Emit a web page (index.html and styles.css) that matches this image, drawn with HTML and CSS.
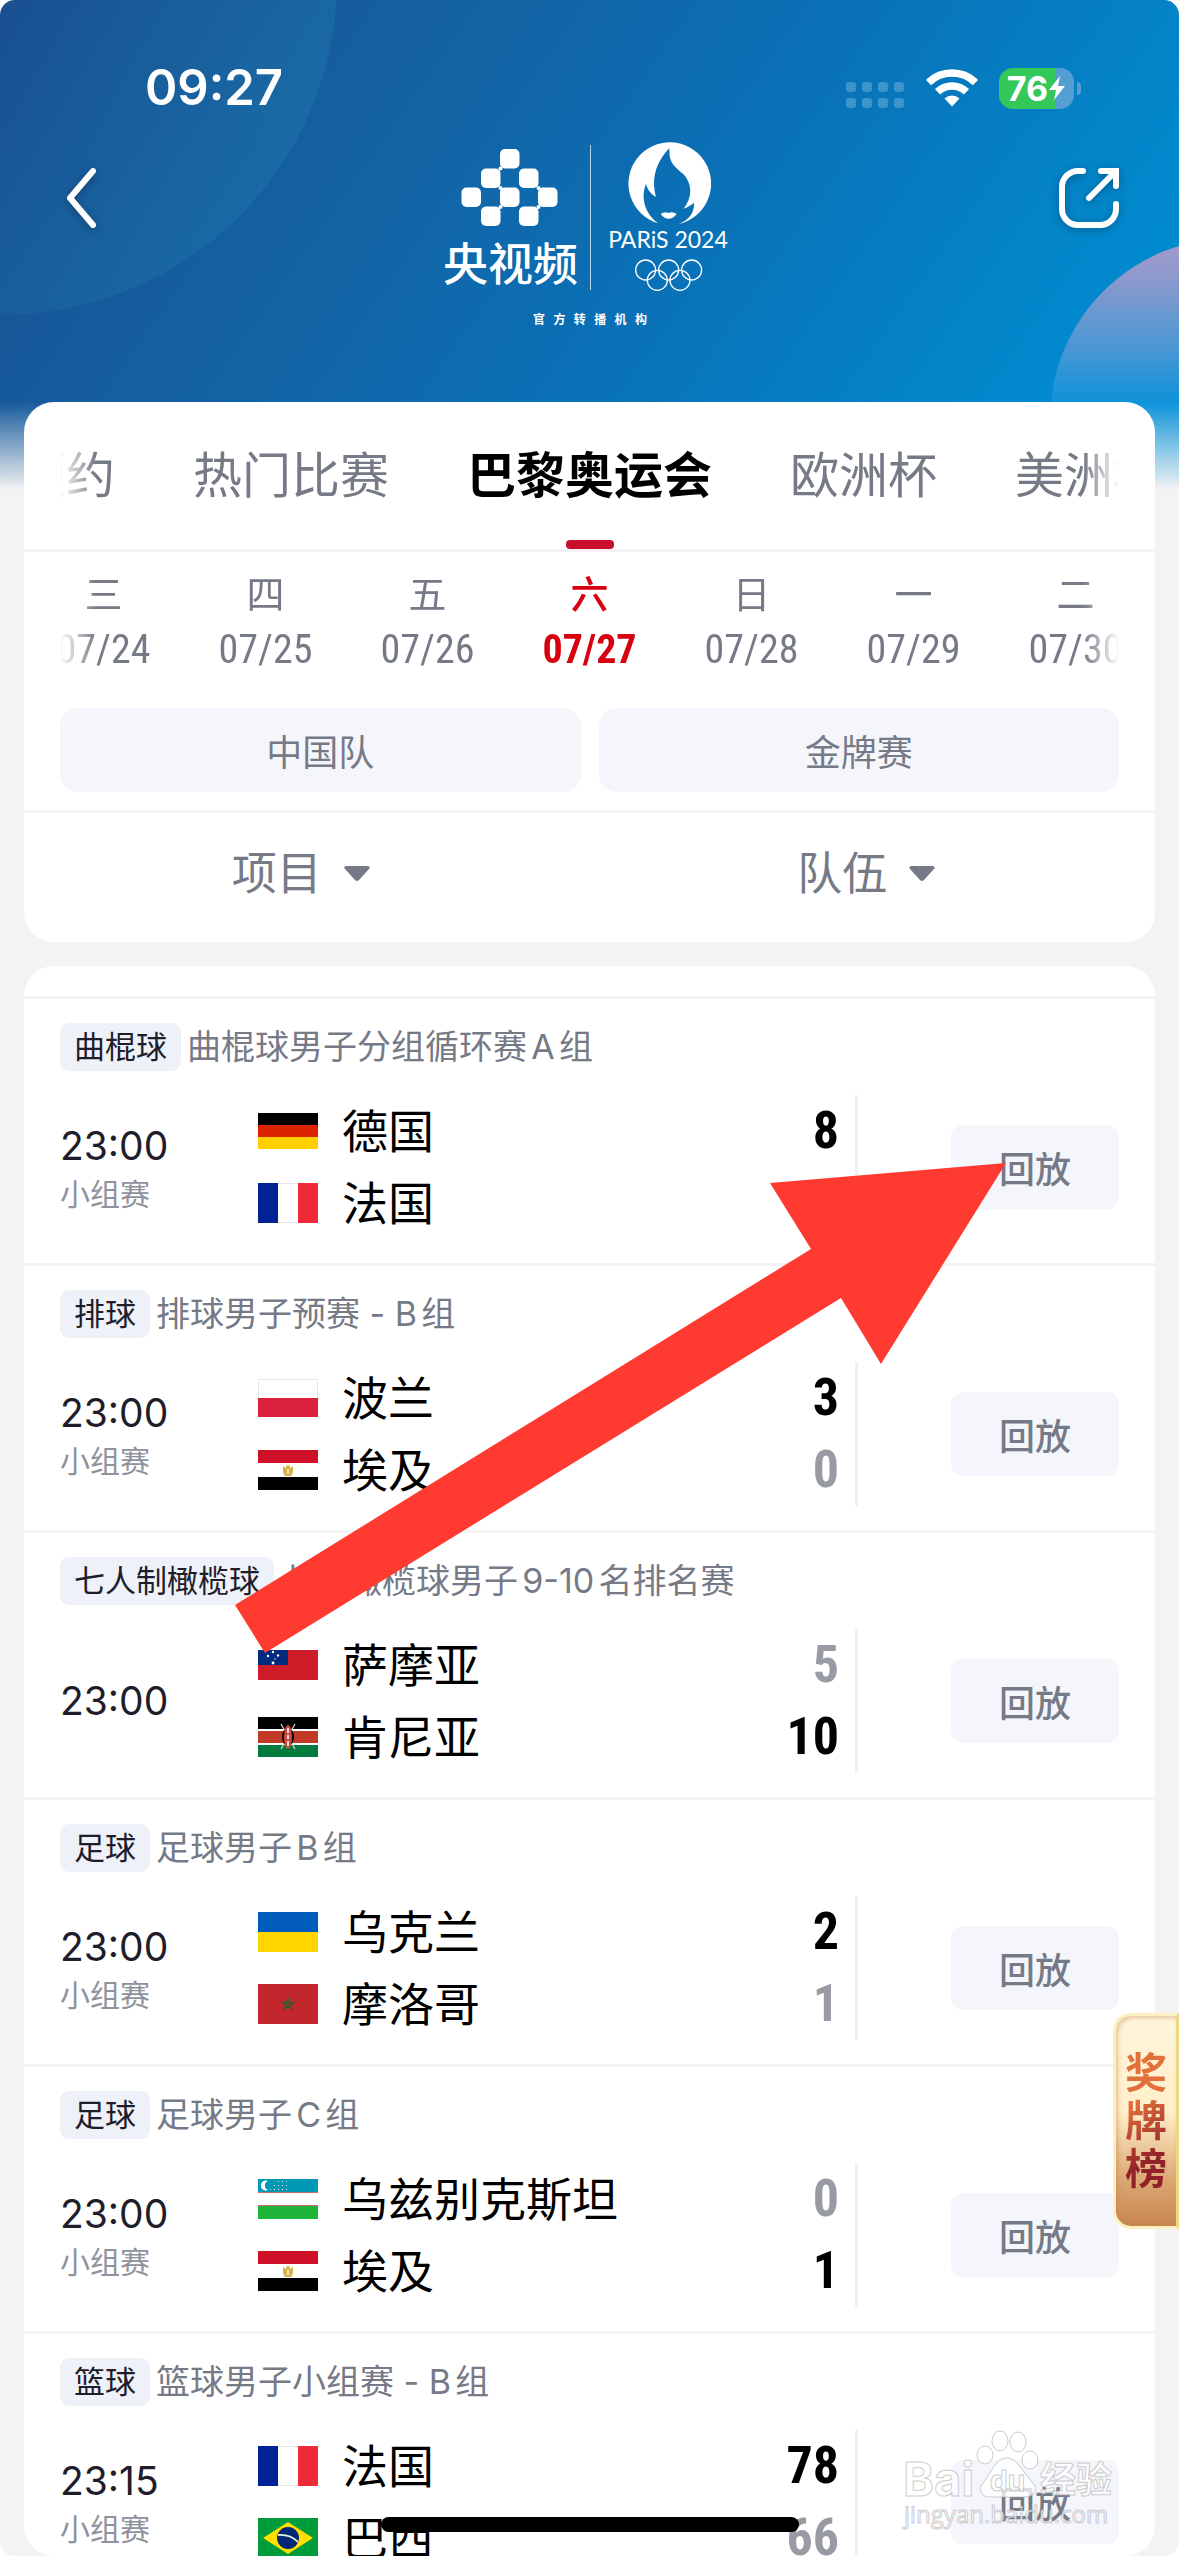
FILE: index.html
```html
<!DOCTYPE html>
<html lang="zh-CN">
<head>
<meta charset="utf-8">
<meta name="viewport" content="width=device-width, initial-scale=1">
<title>巴黎奥运会</title>
<link rel="stylesheet" href="styles.css">
</head>
<body>
<svg class="defs" aria-hidden="true">
  <symbol id="de" viewBox="0 0 60 40"><path fill="#000" d="M0 2h60v12H0z"/><path fill="#dd2200" d="M0 14h60v12H0z"/><path fill="#ffcf00" d="M0 26h60v12H0z"/></symbol>
  <symbol id="fr" viewBox="0 0 60 40"><path fill="#fff" stroke="#e8e8e8" d="M0 .5h60v39H0z"/><path fill="#002295" d="M0 0h20v40H0z"/><path fill="#ef2b3a" d="M40 0h20v40H40z"/></symbol>
  <symbol id="pl" viewBox="0 0 60 40"><path fill="#fff" stroke="#e8e8e8" d="M.5 1.5h59v20H.5z"/><path fill="#dc213d" d="M0 20h60v19H0z"/></symbol>
  <symbol id="eg" viewBox="0 0 60 40"><path fill="#fff" d="M0 0h60v40H0z"/><path fill="#ce1126" d="M0 0h60v13H0z"/><path fill="#000" d="M0 27h60v13H0z"/><path fill="#d6b34a" d="M25 16l3 2 1-3h2l1 3 3-2v8l-2-1 1 3h-8l1-3-2 1z"/><path fill="#f3e6bd" d="M29 19h2v5h-2z"/></symbol>
  <symbol id="ws" viewBox="0 0 60 40"><path fill="#ce1d28" d="M0 5h60v30H0z"/><path fill="#002b7f" d="M0 5h30v15H0z"/><g fill="#fff"><circle cx="15" cy="7" r="1.2"/><circle cx="10" cy="11" r="1.2"/><circle cx="20" cy="10.500" r="1.200"/><circle cx="17" cy="14" r=".7"/><circle cx="15" cy="18" r="1.400"/></g></symbol>
  <symbol id="ke" viewBox="0 0 60 40"><path fill="#fff" d="M0 0h60v40H0z"/><path d="M0 0h60v12H0z"/><path fill="#c13a26" d="M0 14h60v12H0z"/><path fill="#007a3d" d="M0 28h60v12H0z"/><path stroke="#ddd" stroke-width="1.200" d="M23 7l14 25M37 7L23 32"/><ellipse cx="30" cy="20" rx="6" ry="9"/><ellipse cx="30" cy="20" rx="4" ry="12" fill="#cf4a3c"/><path stroke="#fff" stroke-width="1.500" d="M30 11v5M30 18v4M30 24v5"/></symbol>
  <symbol id="ua" viewBox="0 0 60 40"><path fill="#005bbb" d="M0 0h60v20H0z"/><path fill="#ffd500" d="M0 20h60v20H0z"/></symbol>
  <symbol id="ma" viewBox="0 0 60 40"><path fill="#c1272d" d="M0 0h60v40H0z"/><path fill="none" stroke="#39582b" stroke-width="1.500" d="M30 14.500l3.400 10.300-8.800-6.300h10.800l-8.800 6.300z"/></symbol>
  <symbol id="uz" viewBox="0 0 60 40"><path fill="#fff" d="M0 0h60v40H0z"/><path fill="#0099b5" d="M0 0h60v13H0z"/><path fill="#1eb53a" d="M0 27h60v13H0z"/><path fill="#ce6a72" d="M0 13h60v1H0zM0 26h60v1H0z"/><path fill="#fff" d="M10 2a5 5 0 1 0 0 9 4.800 4.800 0 0 1 0-9z"/><g fill="#cdebf1"><path d="M20 2h1v1h-1zM24 2h1v1h-1zM28 2h1v1h-1zM16 6h1v1h-1zM20 6h1v1h-1zM24 6h1v1h-1zM28 6h1v1h-1zM12 10h1v1h-1zM16 10h1v1h-1zM20 10h1v1h-1zM24 10h1v1h-1zM28 10h1v1h-1z"/></g></symbol>
  <symbol id="br" viewBox="0 0 60 40"><path fill="#009c3b" d="M0 0h60v40H0z"/><path fill="#ffdf00" d="M5 20L30 4l25 16-25 16z"/><circle cx="30" cy="20" r="11" fill="#002776"/><path fill="none" stroke="#e6f0d8" stroke-width="1.800" d="M20 17q12-1 20 7"/></symbol>
</svg>

<div class="app">
  <div class="backdrop" aria-hidden="true"></div>

  <header class="hero">
    <div class="status">
      <span class="clock">09:27</span>
      <div class="status-icons">
        <svg width="58" height="26" viewBox="0 0 58 26" class="dots" aria-hidden="true"><g fill="#fff" fill-opacity=".22"><rect width="10" height="10" rx="3"/><rect x="16" width="10" height="10" rx="3"/><rect x="32" width="10" height="10" rx="3"/><rect x="48" width="10" height="10" rx="3"/><rect y="16" width="10" height="10" rx="3"/><rect x="16" y="16" width="10" height="10" rx="3"/><rect x="32" y="16" width="10" height="10" rx="3"/><rect x="48" y="16" width="10" height="10" rx="3"/></g></svg>
        <svg width="52" height="38" viewBox="0 0 52 38" class="wifi" aria-hidden="true"><g fill="none" stroke="#fff" stroke-width="7.500"><path d="M2.500 13.500a34 34 0 0 1 47 0"/><path d="M11.500 22.700a21 21 0 0 1 29 0"/></g><path fill="#fff" d="M18.500 29.500a11 11 0 0 1 15 0L26 37.500z"/></svg>
        <div class="battery"><span>76</span><svg width="18" height="26" viewBox="0 0 18 26" aria-hidden="true"><path fill="#fff" d="M12 1L1 15h7l-2 10L17 11h-7z"/></svg></div>
      </div>
    </div>
    <nav class="nav">
      <button class="icon-btn" type="button" aria-label="返回"><svg width="60" height="60" viewBox="0 0 60 60"><path fill="none" stroke="#fff" stroke-width="6" stroke-linecap="round" stroke-linejoin="round" d="M33 3L10 30l23 27"/></svg></button>
      <svg class="logo" width="300" height="190" viewBox="440 142 300 190" role="img" aria-label="央视频 PARIS 2024 官方转播机构">
        <g fill="#fff">
          <rect x="500" y="149" width="19.500" height="19.500" rx="5"/><rect x="481" y="168.500" width="19.500" height="19.500" rx="5"/><rect x="519" y="168.500" width="19.500" height="19.500" rx="5"/><rect x="461.500" y="187.500" width="19.500" height="19.500" rx="5"/><rect x="500" y="187.500" width="19.500" height="19.500" rx="5"/><rect x="538" y="187.500" width="19.500" height="19.500" rx="5"/><rect x="481" y="206.500" width="19.500" height="19.500" rx="5"/><rect x="519" y="206.500" width="19.500" height="19.500" rx="5"/>
          <circle cx="500.500" cy="168.500" r="2"/><circle cx="500.500" cy="188" r="2"/><circle cx="500.500" cy="207" r="2"/><circle cx="538.500" cy="188" r="2"/><circle cx="538.500" cy="207" r="2"/>
          <rect x="590" y="145" width="1" height="145" fill-opacity=".7"/>
          <text class="logo-name" x="443" y="281">央视频</text>
          <text class="logo-paris" x="668" y="248" text-anchor="middle">PARiS 2024</text>
          <text class="logo-role" x="590" y="324" text-anchor="middle">官&#8194;&#8201;方&#8194;&#8201;转&#8194;&#8201;播&#8194;&#8201;机&#8194;&#8201;构</text>
        </g>
        <g transform="translate(400 120) scale(.3333)">
          <path fill="#fff" d="M775 310A124 124 0 1 1 836 312C870 300 884 275 882 248C872 256 862 262 851 266C875 235 880 195 850 162C825 140 806 130 808 84C770 125 752 175 768 230C752 222 742 208 738 191C722 230 732 280 775 310zM782 282q12-8 24-3 12-5 24 3-10 14-24 14t-24-14z"/>
          <g fill="none" stroke="#fff" stroke-width="4"><circle cx="737" cy="450" r="30"/><circle cx="806" cy="450" r="30"/><circle cx="875" cy="450" r="30"/><circle cx="772" cy="481" r="30"/><circle cx="840" cy="481" r="30"/></g>
        </g>
      </svg>
      <button class="icon-btn" type="button" aria-label="分享"><svg width="60" height="60" viewBox="0 0 60 60"><g fill="none" stroke="#fff" stroke-width="6" stroke-linecap="round" stroke-linejoin="round"><path d="M24 3h-5A16 16 0 0 0 3 19v22a16 16 0 0 0 16 16h22a16 16 0 0 0 16-16v-5"/><path d="M42 3h15v15M56 4L30 30"/></g><path fill="#fff" d="M50 0h10v10z"/></svg></button>
    </nav>
  </header>

  <section class="card filters">
    <div class="tab-bar">
      <div class="tabs fade">
        <button type="button" class="tab">预约</button>
        <button type="button" class="tab">热门比赛</button>
        <button type="button" class="tab active">巴黎奥运会</button>
        <button type="button" class="tab">欧洲杯</button>
        <button type="button" class="tab">美洲杯</button>
      </div>
    </div>
    <div class="days fade">
      <button type="button" class="day"><span>三</span><b>07/24</b></button>
      <button type="button" class="day"><span>四</span><b>07/25</b></button>
      <button type="button" class="day"><span>五</span><b>07/26</b></button>
      <button type="button" class="day active"><span>六</span><b>07/27</b></button>
      <button type="button" class="day"><span>日</span><b>07/28</b></button>
      <button type="button" class="day"><span>一</span><b>07/29</b></button>
      <button type="button" class="day"><span>二</span><b>07/30</b></button>
    </div>
    <div class="chips">
      <button type="button" class="chip">中国队</button>
      <button type="button" class="chip">金牌赛</button>
    </div>
    <div class="selects">
      <label class="select"><select aria-label="项目"><option>项目</option></select><svg width="26" height="15" viewBox="0 0 26 15" aria-hidden="true"><path fill="#767a86" d="M2 0h22q3 1 1 3L15 14q-2 2-4 0L1 3Q-1 1 2 0z"/></svg></label>
      <label class="select"><select aria-label="队伍"><option>队伍</option></select><svg width="26" height="15" viewBox="0 0 26 15" aria-hidden="true"><path fill="#767a86" d="M2 0h22q3 1 1 3L15 14q-2 2-4 0L1 3Q-1 1 2 0z"/></svg></label>
    </div>
  </section>

  <main class="card matches">
    <article class="match">
      <div class="head"><span class="tag">曲棍球</span><span class="league">曲棍球男子分组循环赛A组</span></div>
      <div class="body">
        <div class="when"><time>23:00</time><span>小组赛</span></div>
        <div class="teams">
          <div class="team"><svg class="flag"><use href="#de"/></svg><span>德国</span><b>8</b></div>
          <div class="team"><svg class="flag"><use href="#fr"/></svg><span>法国</span></div>
        </div>
        <div class="action"><button type="button">回放</button></div>
      </div>
    </article>
    <article class="match">
      <div class="head"><span class="tag">排球</span><span class="league">排球男子预赛 - B组</span></div>
      <div class="body">
        <div class="when"><time>23:00</time><span>小组赛</span></div>
        <div class="teams">
          <div class="team"><svg class="flag"><use href="#pl"/></svg><span>波兰</span><b>3</b></div>
          <div class="team"><svg class="flag"><use href="#eg"/></svg><span>埃及</span><b class="lost">0</b></div>
        </div>
        <div class="action"><button type="button">回放</button></div>
      </div>
    </article>
    <article class="match">
      <div class="head"><span class="tag">七人制橄榄球</span><span class="league">七人橄榄球男子9-10名排名赛</span></div>
      <div class="body">
        <div class="when"><time>23:00</time></div>
        <div class="teams">
          <div class="team"><svg class="flag"><use href="#ws"/></svg><span>萨摩亚</span><b class="lost">5</b></div>
          <div class="team"><svg class="flag"><use href="#ke"/></svg><span>肯尼亚</span><b>10</b></div>
        </div>
        <div class="action"><button type="button">回放</button></div>
      </div>
    </article>
    <article class="match">
      <div class="head"><span class="tag">足球</span><span class="league">足球男子B组</span></div>
      <div class="body">
        <div class="when"><time>23:00</time><span>小组赛</span></div>
        <div class="teams">
          <div class="team"><svg class="flag"><use href="#ua"/></svg><span>乌克兰</span><b>2</b></div>
          <div class="team"><svg class="flag"><use href="#ma"/></svg><span>摩洛哥</span><b class="lost">1</b></div>
        </div>
        <div class="action"><button type="button">回放</button></div>
      </div>
    </article>
    <article class="match">
      <div class="head"><span class="tag">足球</span><span class="league">足球男子C组</span></div>
      <div class="body">
        <div class="when"><time>23:00</time><span>小组赛</span></div>
        <div class="teams">
          <div class="team"><svg class="flag"><use href="#uz"/></svg><span>乌兹别克斯坦</span><b class="lost">0</b></div>
          <div class="team"><svg class="flag"><use href="#eg"/></svg><span>埃及</span><b>1</b></div>
        </div>
        <div class="action"><button type="button">回放</button></div>
      </div>
    </article>
    <article class="match">
      <div class="head"><span class="tag">篮球</span><span class="league">篮球男子小组赛 - B组</span></div>
      <div class="body">
        <div class="when"><time>23:15</time><span>小组赛</span></div>
        <div class="teams">
          <div class="team"><svg class="flag"><use href="#fr"/></svg><span>法国</span><b>78</b></div>
          <div class="team"><svg class="flag"><use href="#br"/></svg><span>巴西</span><b class="lost">66</b></div>
        </div>
        <div class="action"><button type="button">回放</button></div>
      </div>
    </article>
  </main>

  <svg class="pointer" width="771" height="490" viewBox="0 0 771 490" aria-hidden="true"><path fill="#ff3b31" d="M771 0L535 20l41 66L0 442l30 48 576-355 40 66z"/></svg>

  <button type="button" class="medals"><span>奖牌榜</span></button>

  <svg class="watermark" width="216" height="128" viewBox="0 0 216 128" role="img" aria-label="Baidu经验">
    <g class="wm">
      <ellipse cx="84" cy="27" rx="8" ry="9"/><ellipse cx="99" cy="13" rx="8" ry="10"/><ellipse cx="117" cy="14" rx="8" ry="10"/><ellipse cx="129" cy="32" rx="8" ry="9"/>
      <path d="M92 40q6-10 14-10t14 10l11 14q6 6 2 11-3 4-9 4H89q-7 0-9-5-2-5 3-10z"/>
      <text x="2" y="68" class="wm-big">Bai</text>
      <text x="89" y="63" class="wm-du">du</text>
      <text x="139" y="65" class="wm-cn">经验</text>
      <text x="3" y="95" class="wm-url">jingyan.baidu.com</text>
    </g>
  </svg>
  <div class="home-bar" aria-hidden="true"></div>
</div>
</body>
</html>
```
FILE: styles.css
```css
* { box-sizing: border-box; }

body {
  margin: 0;
  background: #fff;
  font-family: Inter, "Noto Sans CJK SC", sans-serif;
  color: #000;
}

button,
select {
  margin: 0;
  padding: 0;
  border: 0;
  background: none;
  font: inherit;
  color: inherit;
}

.defs { position: absolute; width: 0; height: 0; }

.app {
  position: relative;
  display: flex;
  flex-direction: column;
  height: 100vh;
  overflow: hidden;
  border-radius: 15px;
  background: #f3f3f3;
}

/* Blue backdrop that fades out behind the first card */
.backdrop {
  position: absolute;
  inset: 0 0 auto;
  height: 490px;
  overflow: hidden;
  background: linear-gradient(125deg, #194d8e 0%, #1364a5 35%, #0a70b6 55%, #0289cd 85%, #018fd6 100%);
  mask-image: linear-gradient(#000 402px, transparent 490px);
}

.backdrop::before,
.backdrop::after {
  content: "";
  position: absolute;
  border-radius: 50%;
}

.backdrop::before {
  left: -335px;
  top: -355px;
  width: 672px;
  height: 670px;
  background: linear-gradient(115deg, transparent 45%, rgba(34, 134, 180, 0.35) 95%);
}

.backdrop::after {
  right: -235px;
  top: 238px;
  width: 364px;
  height: 364px;
  background: linear-gradient(#a59bcb 0%, #8f99cc 10%, #4a97d3 30%, #0b92d9 46%);
}

.hero { position: relative; flex: none; height: 402px; color: #fff; }

.status {
  display: flex;
  align-items: center;
  justify-content: space-between;
  height: 118px;
  padding: 58px 98px 0 145px;
}

.clock { font-size: 49px; font-weight: 600; line-height: 60px; }

.status-icons { display: flex; align-items: center; }
.dots { margin: 14px 22px 0 0; }
.wifi { margin-right: 21px; }

.battery {
  position: relative;
  display: flex;
  align-items: center;
  justify-content: center;
  width: 75px;
  height: 41px;
  margin-right: 7px;
  border-radius: 14px;
  background: linear-gradient(90deg, #34c759 57px, #539fd2 57px);
  font-size: 34px;
  font-weight: 700;
  line-height: 41px;
}

.battery::after {
  content: "";
  position: absolute;
  right: -7px;
  top: 14px;
  width: 4px;
  height: 13px;
  border-radius: 0 4px 4px 0;
  background: #539fd2;
}

.nav {
  display: flex;
  align-items: flex-start;
  justify-content: space-between;
  padding: 24px 60px 0;
}

.icon-btn {
  width: 60px;
  height: 60px;
  margin-top: 26px;
  filter: drop-shadow(0 2px 4px rgba(0, 0, 0, 0.3));
}

.icon-btn svg { display: block; overflow: visible; }

.logo-name { font: 500 45px "Noto Sans CJK SC", sans-serif; }
.logo-paris { font: 400 23px Lato, sans-serif; }
.logo-role { font: 700 12px "Noto Sans CJK SC", sans-serif; }

.card { position: relative; flex: none; margin: 0 24px; background: #fff; border-radius: 30px; }

.fade {
  display: flex;
  justify-content: center;
  margin: 0 36px;
  overflow: hidden;
  mask-image: linear-gradient(90deg, transparent, #000 36px, #000 calc(100% - 36px), transparent);
}

.filters { color: #767a86; }

.tab-bar { border-bottom: 3px solid #f3f3f3; }
.tabs { gap: 78px; height: 147px; }

.tab { position: relative; flex: none; font-size: 49px; line-height: 147px; }
.tab.active { color: #000; font-weight: 700; }

.tab.active::after {
  content: "";
  position: absolute;
  left: 50%;
  bottom: 0;
  width: 48px;
  height: 9px;
  margin-left: -24px;
  border-radius: 4px;
  background: #c8102e;
}

.days { padding: 18px 0 26px; }

.day { flex: none; width: 162px; text-align: center; }
.day span { display: block; font-size: 38px; line-height: 48px; }

.day b {
  display: block;
  font: 400 40px/64px "Liberation Sans Narrow", "Roboto Condensed", Roboto, sans-serif;
}

.day.active { color: #d7000f; }
.day.active span { font-weight: 500; }
.day.active b { font-weight: 700; }

.chips { display: grid; grid-template-columns: 1fr 1fr; gap: 18px; padding: 0 36px 18px; }

.chip { height: 84px; border-radius: 18px; background: #f4f6fb; font-size: 36px; }

.selects {
  display: grid;
  grid-template-columns: 1fr 1fr;
  gap: 12px;
  height: 132px;
  padding: 0 12px 8px 0;
  border-top: 3px solid #f3f3f3;
}

.select { display: flex; align-items: center; justify-content: center; gap: 21px; }
.select select { appearance: none; font-size: 45px; line-height: 64px; }

.matches { flex: 1; min-height: 0; margin-top: 24px; padding-top: 30px; overflow: hidden; }

.match { padding: 24px 36px; border-top: 3px solid #f3f3f3; }

.head { display: flex; align-items: center; gap: 6px; height: 48px; }

.tag {
  padding: 0 14px;
  border-radius: 9px;
  background: #eef2f8;
  color: #1f1d2b;
  font-size: 31px;
  line-height: 48px;
}

.league { color: #767a86; font-size: 34px; line-height: 48px; text-autospace: normal; }

.body { display: grid; grid-template-columns: 198px 1fr 264px; height: 144px; margin-top: 24px; }

.when { display: flex; flex-direction: column; justify-content: center; }
.when time { color: #1f1d2b; font-size: 39px; line-height: 54px; }
.when span { color: #8f929c; font-size: 30px; line-height: 42px; }

.team { display: flex; align-items: center; height: 72px; padding-right: 16px; }
.team span { flex: 1; margin-left: 24px; font-size: 46px; line-height: 72px; }

.team b {
  font: 700 52px/72px "Liberation Sans Narrow", "Roboto Condensed", Roboto, sans-serif;
}

.team .lost { color: #989ba4; }

.flag { width: 60px; height: 40px; }

.action {
  display: flex;
  align-items: center;
  justify-content: flex-end;
  border-left: 3px solid #eef2f8;
}

.action button {
  width: 168px;
  height: 84px;
  border-radius: 12px;
  background: #f4f6fb;
  color: #767a86;
  font-size: 36px;
  font-weight: 500;
}

/* Overlays */
.pointer { position: absolute; left: 235px; top: 1163px; pointer-events: none; }

.medals {
  position: absolute;
  right: 0;
  top: 2013px;
  width: 66px;
  height: 216px;
  border: 3px solid #fdf0c0;
  border-right-color: #eed981;
  border-radius: 18px 0 0 18px;
  background: linear-gradient(#fff5dc, #ffefca 45%, #dca874 78%, #c98650);
  box-shadow: inset 2px 2px 4px rgba(190, 120, 60, 0.4);
}

.medals span {
  display: block;
  width: 42px;
  margin: 0 auto;
  background: linear-gradient(150deg, #e2703b 35%, #93212a 75%);
  background-clip: text;
  color: transparent;
  font-size: 42px;
  font-weight: 700;
  line-height: 48px;
}

.watermark { position: absolute; right: 62px; bottom: 0; pointer-events: none; }

.wm {
  fill: rgba(255, 255, 255, 0.75);
  stroke: rgba(170, 170, 170, 0.6);
  stroke-width: 1px;
}

.wm-big { font: 700 47px Inter, sans-serif; }
.wm-du { font: 700 28px Inter, sans-serif; }
.wm-cn { font: 700 36px "Noto Sans CJK SC", sans-serif; }
.wm-url { font: 400 24px "Open Sans", sans-serif; }

.home-bar {
  position: absolute;
  left: 50%;
  bottom: 24px;
  width: 418px;
  height: 15px;
  margin-left: -209px;
  border-radius: 8px;
  background: #000;
}
```
